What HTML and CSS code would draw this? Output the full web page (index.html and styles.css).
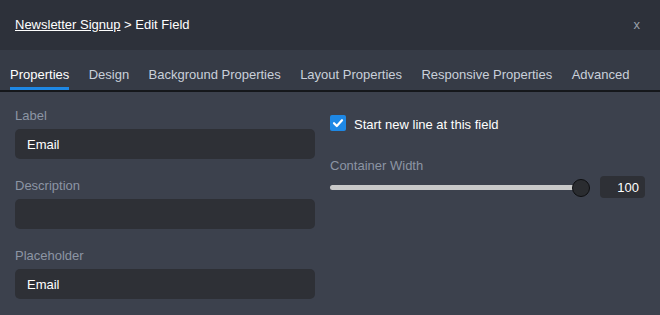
FILE: index.html
```html
<!DOCTYPE html>
<html>
<head>
<meta charset="utf-8">
<link rel="stylesheet" href="styles.css">
</head>
<body>
<div class="panel">
  <header class="header">
    <div class="title"><a class="crumb" href="#">Newsletter Signup</a> &gt; Edit Field</div>
    <div class="close">x</div>
  </header>
  <nav class="tabs">
    <div class="tab active">Properties</div>
    <div class="tab">Design</div>
    <div class="tab">Background Properties</div>
    <div class="tab">Layout Properties</div>
    <div class="tab">Responsive Properties</div>
    <div class="tab">Advanced</div>
  </nav>
  <main class="content">
    <section class="col left">
      <div class="field">
        <div class="label">Label</div>
        <div class="input">Email</div>
      </div>
      <div class="field">
        <div class="label">Description</div>
        <div class="input"></div>
      </div>
      <div class="field">
        <div class="label">Placeholder</div>
        <div class="input">Email</div>
      </div>
    </section>
    <section class="col right">
      <div class="check-row">
        <span class="checkbox">
          <svg width="16" height="16" viewBox="0 0 16 16"><path d="M4 8.2 L6.8 11 L12 5.2" fill="none" stroke="#fff" stroke-width="2.2" stroke-linecap="round" stroke-linejoin="round"/></svg>
        </span>
        <span class="check-text">Start new line at this field</span>
      </div>
      <div class="label width-label">Container Width</div>
      <div class="slider-row">
        <div class="slider">
          <div class="track"></div>
          <div class="thumb"></div>
        </div>
        <div class="num">100</div>
      </div>
    </section>
  </main>
</div>
</body>
</html>
```

FILE: styles.css
```css
* { box-sizing: border-box; }
html, body { margin: 0; padding: 0; }
body {
  width: 660px;
  height: 315px;
  overflow: hidden;
  background: #3c414d;
  font-family: "Liberation Sans", Arial, sans-serif;
  font-size: 13px;
  line-height: 15px;
}
.panel { display: flex; flex-direction: column; height: 315px; }
.header {
  height: 50px;
  background: #2d313a;
  display: flex;
  align-items: center;
  justify-content: space-between;
  padding: 0 20px 0 15px;
  color: #ffffff;
}
.title { padding-bottom: 1px; }
.crumb { color: #ffffff; text-decoration: underline; }
.close { color: #9aa0a9; padding-bottom: 2px; }
.tabs {
  display: flex;
  gap: 19.4px;
  padding: 0 10px;
  height: 42px;
  background: #363b46;
  border-bottom: 2px solid #15171b;
}
.tab {
  padding-top: 17px;
  height: 40px;
  border-bottom: 3px solid transparent;
  color: #c9d0da;
}
.tab.active { color: #ffffff; border-bottom-color: #1e88e5; }
.content {
  flex: 1;
  display: flex;
  gap: 15px;
  padding: 16px 15px 0 15px;
}
.col.left { width: 300px; display: flex; flex-direction: column; gap: 19px; }
.col.right { flex: 1; display: flex; flex-direction: column; }
.label { color: #8c95a4; }
.field .label { margin-bottom: 6px; }
.input {
  height: 30px;
  border-radius: 5px;
  background: #2e3036;
  color: #ffffff;
  padding: 0 12px;
  display: flex;
  align-items: center;
  padding-top: 1px;
}
.check-row { display: flex; align-items: center; gap: 8px; margin-top: 7px; height: 16px; }
.checkbox {
  width: 16px; height: 16px;
  border-radius: 2px;
  background: #1e88e5;
  display: block;
}
.checkbox svg { display: block; }
.check-text { color: #ffffff; padding-top: 2px; }
.width-label { margin-top: 27px; }
.slider-row { display: flex; align-items: center; gap: 10px; margin-top: 3px; height: 22px; }
.slider { position: relative; width: 260px; height: 22px; display: flex; align-items: center; }
.track { width: 254px; height: 5px; border-radius: 3px; background: #c9c9c9; margin-top: 1px; }
.thumb {
  position: absolute;
  right: 0;
  top: 3px;
  width: 18px; height: 18px;
  border-radius: 50%;
  background: #2a2c30;
  border: 1px solid #0e0f11;
}
.num {
  width: 45px;
  height: 22px;
  border-radius: 4px;
  background: #2e3036;
  color: #ffffff;
  text-align: right;
  padding: 4px 6px 0 0;
}
```
